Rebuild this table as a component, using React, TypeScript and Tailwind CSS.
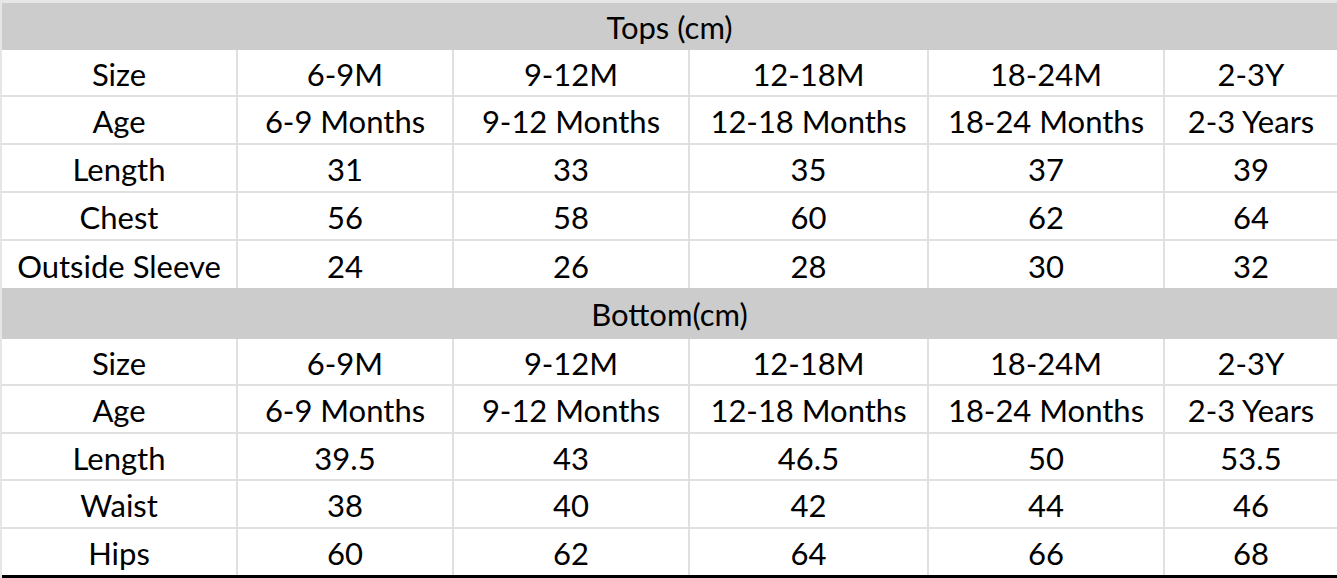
import React from "react";

const cols = ["w-[236px]", "w-[216px]", "w-[236px]", "w-[239px]", "w-[236px]", "flex-1"];

type Row = string[];

const tops: Row[] = [
  ["Size", "6-9M", "9-12M", "12-18M", "18-24M", "2-3Y"],
  ["Age", "6-9 Months", "9-12 Months", "12-18 Months", "18-24 Months", "2-3 Years"],
  ["Length", "31", "33", "35", "37", "39"],
  ["Chest", "56", "58", "60", "62", "64"],
  ["Outside Sleeve", "24", "26", "28", "30", "32"],
];
const topH = ["h-[47px]", "h-[48px]", "h-[48px]", "h-[48px]", "h-[47px]"];

const bottoms: Row[] = [
  ["Size", "6-9M", "9-12M", "12-18M", "18-24M", "2-3Y"],
  ["Age", "6-9 Months", "9-12 Months", "12-18 Months", "18-24 Months", "2-3 Years"],
  ["Length", "39.5", "43", "46.5", "50", "53.5"],
  ["Waist", "38", "40", "42", "44", "46"],
  ["Hips", "60", "62", "64", "66", "68"],
];
const botH = ["h-[47px]", "h-[48px]", "h-[47px]", "h-[48px]", "h-[46px]"];

function DataRow({ row, h, border }: { row: Row; h: string; border: boolean }) {
  return (
    <div className={`flex ${h} ${border ? "border-b-2 border-[#e0e0e0]" : ""}`}>
      {row.map((c, i) => (
        <div
          key={i}
          className={`${cols[i]} shrink-0 flex items-center justify-center pt-[3px] ${
            i < 5 ? "border-r-2 border-[#e0e0e0]" : ""
          } whitespace-nowrap`}
        >
          {c}
        </div>
      ))}
    </div>
  );
}

function Header({ text, h }: { text: string; h: string }) {
  return (
    <div className={`${h} bg-[#cccccc] flex items-center justify-center pt-[2px]`}>
      {text}
    </div>
  );
}

export default function App() {
  return (
    <div
      className="w-[1337px] h-[578px] overflow-hidden bg-white text-black text-[31px] leading-none"
      style={{ fontFamily: "Lato, 'Open Sans', sans-serif" }}
    >
      <div className="border-t-[3px] border-l-2 border-[#e6e6e6] flex flex-col">
        <Header text="Tops (cm)" h="h-[47px]" />
        {tops.map((r, i) => (
          <DataRow key={i} row={r} h={topH[i]} border={i < tops.length - 1} />
        ))}
        <Header text="Bottom(cm)" h="h-[51px]" />
        {bottoms.map((r, i) => (
          <DataRow key={i} row={r} h={botH[i]} border={i < bottoms.length - 1} />
        ))}
        <div className="h-[3px] bg-black" />
      </div>
    </div>
  );
}
